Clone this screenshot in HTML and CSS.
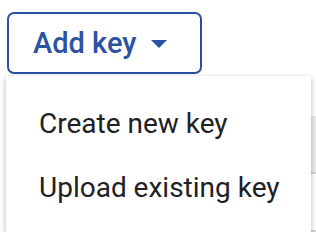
FILE: index.html
```html
<!DOCTYPE html>
<html lang="en">
<head>
  <meta charset="UTF-8" />
  <meta name="viewport" content="width=device-width, initial-scale=1.0" />
  <title>Add key</title>
  <link rel="stylesheet" href="styles.css">
</head>
<body>
  <div class="page">
    <button type="button" class="add-btn">
      Add key
      <svg class="caret" width="16" height="8" viewBox="0 0 16 8"><path d="M0 0 L16 0 L8 8 Z" fill="currentColor"/></svg>
    </button>

    <div class="keys-table">
      <div class="table-head"></div>
      <div class="table-row"></div>
    </div>

    <div class="menu">
      <div class="menu-item">Create new key</div>
      <div class="menu-item">Upload existing key</div>
    </div>
  </div>
</body>
</html>
```

FILE: styles.css
```css
body {
  margin: 0;
  background: #fff;
  font-family: Roboto, "Liberation Sans", sans-serif;
}
.page {
  position: relative;
  padding: 12px 0 0 7px;
}
.add-btn {
  display: flex;
  align-items: center;
  gap: 14px;
  box-sizing: border-box;
  width: 195px;
  height: 62px;
  padding: 0 0 0 24px;
  border: 2px solid #2950a2;
  border-radius: 7px;
  background: #fff;
  color: #2c52a3;
  font-family: Roboto, "Liberation Sans", sans-serif;
  font-size: 29px;
  font-weight: 500;
  cursor: pointer;
}
.caret {
  margin-top: 1px;
}
.keys-table {
  margin-top: 42px;
}
.table-head {
  height: 56px;
  background: #ececec;
  border-bottom: 2px solid #d4d4d4;
}
.table-row {
  height: 56px;
  border-bottom: 2px solid #d4d4d4;
}
.menu {
  position: absolute;
  left: 6px;
  top: 76px;
  width: 305px;
  padding: 16px 0 15px;
  background: #fff;
  box-shadow: 0 2px 6px rgba(0,0,0,0.28);
}
.menu-item {
  height: 64px;
  line-height: 64px;
  padding-left: 33px;
  font-size: 28px;
  color: #202124;
  white-space: nowrap;
}
```
